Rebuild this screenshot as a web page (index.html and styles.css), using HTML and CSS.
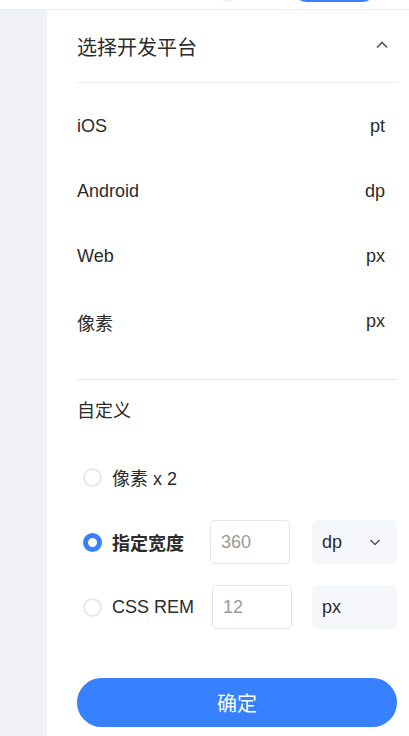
FILE: index.html
```html
<!DOCTYPE html>
<html lang="zh-CN">
<head>
    <meta charset="UTF-8">
    <meta name="viewport" content="width=device-width, initial-scale=1.0">
    <title>选择开发平台</title>
    <link rel="stylesheet" href="styles.css">
</head>
<body>
    <div class="topbar">
        <span class="avatar"></span>
        <span class="top-btn"></span>
    </div>

    <div class="layout">
        <div class="sidebar"></div>

        <div class="panel">
            <div class="panel-head">
                <span class="panel-title">选择开发平台</span>
                <svg class="chevron" width="12" height="8" viewBox="0 0 12 8">
                    <path d="M1 6.5 L6 1.5 L11 6.5" fill="none" stroke="#555" stroke-width="1.6"/>
                </svg>
            </div>

            <ul class="platform-list">
                <li class="platform"><span>iOS</span><span>pt</span></li>
                <li class="platform"><span>Android</span><span>dp</span></li>
                <li class="platform"><span>Web</span><span>px</span></li>
                <li class="platform"><span>像素</span><span>px</span></li>
            </ul>

            <div class="custom">
                <div class="custom-title">自定义</div>

                <div class="option">
                    <span class="radio"></span>
                    <span class="option-label">像素 x 2</span>
                </div>

                <div class="option">
                    <span class="radio checked"></span>
                    <span class="option-label bold wide">指定宽度</span>
                    <input class="num-input" type="text" placeholder="360">
                    <div class="unit-select">
                        <span>dp</span>
                        <svg width="12" height="8" viewBox="0 0 12 8">
                            <path d="M1.5 2 L6 6.5 L10.5 2" fill="none" stroke="#555" stroke-width="1.5"/>
                        </svg>
                    </div>
                </div>

                <div class="option">
                    <span class="radio"></span>
                    <span class="option-label wider">CSS REM</span>
                    <input class="num-input" type="text" placeholder="12">
                    <div class="unit-select">
                        <span>px</span>
                    </div>
                </div>
            </div>

            <button class="confirm-btn">确定</button>
        </div>
    </div>
</body>
</html>
```

FILE: styles.css
```css
* {
    margin: 0;
    padding: 0;
    box-sizing: border-box;
}

body {
    font-family: "Liberation Sans", "Noto Sans CJK SC", sans-serif;
    color: #2b2b2b;
    background: white;
    height: 736px;
    overflow: hidden;
}

.topbar {
    height: 10px;
    border-bottom: 1px solid #ececec;
    display: flex;
    align-items: flex-end;
    overflow: hidden;
}

.avatar {
    width: 22px;
    height: 22px;
    border-radius: 50%;
    background: #f0f0f0;
    margin: 0 0 7px 217px;
    flex-shrink: 0;
}

.top-btn {
    width: 85px;
    height: 30px;
    border-radius: 15px;
    background: #3780ff;
    margin: 0 0 7px 53px;
    flex-shrink: 0;
}

.layout {
    display: flex;
    height: 726px;
}

.sidebar {
    width: 47px;
    background: #f0f1f5;
}

.panel {
    flex: 1;
    padding: 0 12px 0 30px;
}

.panel-head {
    height: 73px;
    display: flex;
    align-items: center;
    justify-content: space-between;
    padding-right: 9px;
    border-bottom: 1px solid #ececec;
}

.panel-title {
    font-size: 20px;
}

.chevron {
    margin-top: -2px;
}

.platform-list {
    list-style: none;
    padding: 11px 0 25px;
    border-bottom: 1px solid #e6e6e6;
}

.platform {
    height: 65px;
    display: flex;
    align-items: center;
    justify-content: space-between;
    padding-right: 12px;
    font-size: 18px;
}

.custom {
    padding-top: 20px;
}

.custom-title {
    font-size: 18px;
    line-height: 22px;
    margin-bottom: 33px;
}

.option {
    display: flex;
    align-items: center;
    height: 44px;
    margin-bottom: 21px;
    font-size: 18px;
}

.radio {
    width: 19px;
    height: 19px;
    border-radius: 50%;
    border: 2px solid #e8e8ea;
    margin-left: 6px;
    margin-right: 10px;
    flex-shrink: 0;
}

.radio.checked {
    border: 5px solid #3780ff;
}

.bold {
    font-weight: bold;
}

.wide {
    width: 98px;
}

.wider {
    width: 100px;
}

.num-input {
    width: 80px;
    height: 44px;
    border: 1px solid #e6e6e6;
    border-radius: 5px;
    padding: 0 10px;
    font-family: inherit;
    font-size: 18px;
    color: #2b2b2b;
    outline: none;
}

.num-input::placeholder {
    color: #9a9a9a;
}

.unit-select {
    margin-left: auto;
    width: 85px;
    height: 44px;
    border-radius: 5px;
    background: #f6f7fb;
    display: flex;
    align-items: center;
    justify-content: space-between;
    padding: 0 16px 0 10px;
    font-size: 18px;
}

.confirm-btn {
    display: block;
    width: 100%;
    height: 49px;
    margin-top: 49px;
    border: none;
    border-radius: 25px;
    background: #3780ff;
    color: white;
    font-family: inherit;
    font-size: 20px;
}
```
